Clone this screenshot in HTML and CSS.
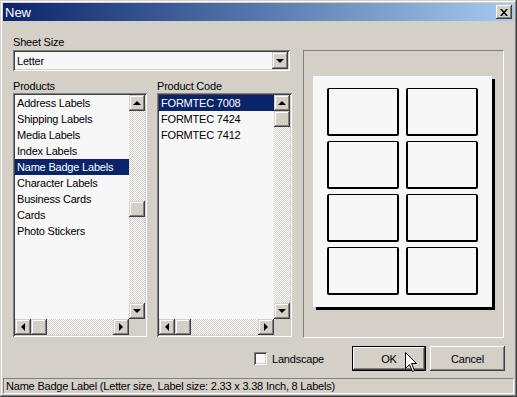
FILE: index.html
```html
<!DOCTYPE html>
<html lang="en">
<head>
    <meta charset="UTF-8">
    <title>New</title>
    <link rel="stylesheet" href="styles.css">
</head>
<body>
    <div class="window">
        <div class="titlebar">
            <span class="title">New</span>
            <span class="close">
                <svg width="8" height="7" viewBox="0 0 8 7"><path d="M0 0h2l2 2.5L6 0h2L5 3.5 8 7H6L4 4.5 2 7H0l3-3.5z" fill="#000"/></svg>
            </span>
        </div>
        <div class="content">
            <div class="main">
                <div class="left">
                    <div class="caption">Sheet Size</div>
                    <div class="combo">
                        <span class="combo-text">Letter</span>
                        <span class="sbtn down"></span>
                    </div>
                    <div class="lists">
                        <div class="group products">
                            <div class="caption">Products</div>
                            <div class="listbox">
                                <ul class="items">
                                    <li>Address Labels</li>
                                    <li>Shipping Labels</li>
                                    <li>Media Labels</li>
                                    <li>Index Labels</li>
                                    <li class="selected">Name Badge Labels</li>
                                    <li>Character Labels</li>
                                    <li>Business Cards</li>
                                    <li>Cards</li>
                                    <li>Photo Stickers</li>
                                </ul>
                                <div class="vscroll">
                                    <span class="sbtn up"></span>
                                    <div class="track"><span class="thumb thumb-low"></span></div>
                                    <span class="sbtn down"></span>
                                </div>
                                <div class="hscroll">
                                    <span class="sbtn left-arrow"></span>
                                    <div class="track"><span class="thumb"></span></div>
                                    <span class="sbtn right-arrow"></span>
                                </div>
                                <div class="corner"></div>
                            </div>
                        </div>
                        <div class="group codes">
                            <div class="caption">Product Code</div>
                            <div class="listbox">
                                <ul class="items">
                                    <li class="selected">FORMTEC 7008</li>
                                    <li>FORMTEC 7424</li>
                                    <li>FORMTEC 7412</li>
                                </ul>
                                <div class="vscroll">
                                    <span class="sbtn up"></span>
                                    <div class="track"><span class="thumb"></span></div>
                                    <span class="sbtn down"></span>
                                </div>
                                <div class="hscroll">
                                    <span class="sbtn left-arrow"></span>
                                    <div class="track"><span class="thumb"></span></div>
                                    <span class="sbtn right-arrow"></span>
                                </div>
                                <div class="corner"></div>
                            </div>
                        </div>
                    </div>
                </div>
                <div class="preview">
                    <div class="paper">
                        <div class="label"></div>
                        <div class="label"></div>
                        <div class="label"></div>
                        <div class="label"></div>
                        <div class="label"></div>
                        <div class="label"></div>
                        <div class="label"></div>
                        <div class="label"></div>
                    </div>
                </div>
            </div>
            <div class="footer">
                <label class="check"><span class="box"></span>Landscape</label>
                <div class="buttons">
                    <button class="btn default">OK</button>
                    <button class="btn">Cancel</button>
                </div>
            </div>
        </div>
        <div class="statusbar">Name Badge Label (Letter size, Label size: 2.33 x 3.38 Inch, 8 Labels)</div>
        <svg class="cursor" width="13" height="21" viewBox="0 0 13 21"><path d="M0.5 0.5V16.5L4.5 12.5L7.5 19.5L9.5 18.5L6.5 11.5H11.5Z" fill="#fff" stroke="#000" stroke-linejoin="miter"/></svg>
    </div>
</body>
</html>
```

FILE: styles.css
```css
body {
    margin: 0;
    font-family: 'Liberation Sans', Arial, sans-serif;
    font-size: 11px;
    letter-spacing: -0.2px;
    color: #000;
    background: #d4d0c8;
}
.window {
    position: relative;
    width: 517px;
    height: 397px;
    box-sizing: border-box;
    padding: 3px;
    background: #d4d0c8;
    box-shadow: inset -1px -1px #404040, inset 1px 1px #d4d0c8, inset -2px -2px #808080, inset 2px 2px #fff;
}
.titlebar {
    height: 18px;
    display: flex;
    align-items: center;
    justify-content: space-between;
    padding: 0 2px;
    background: linear-gradient(to right, #0a246a, #a6caf0);
}
.title {
    color: #fff;
    font-size: 13px;
    letter-spacing: 0;
}
.close {
    width: 16px;
    height: 14px;
    display: flex;
    align-items: center;
    justify-content: center;
    background: #d4d0c8;
    box-shadow: inset -1px -1px #404040, inset 1px 1px #fff, inset -2px -2px #808080, inset 2px 2px #d4d0c8;
}
.content {
    padding: 14px 10px 0 10px;
}
.main {
    display: flex;
    gap: 11px;
}
.left {
    width: 279px;
}
.caption {
    height: 14px;
    line-height: 14px;
}
.combo {
    width: 277px;
    height: 21px;
    margin-top: 1px;
    box-sizing: border-box;
    padding: 2px;
    display: flex;
    background: #f7f7f7;
    box-shadow: inset 1px 1px #808080, inset -1px -1px #fff, inset 2px 2px #404040, inset -2px -2px #d4d0c8;
}
.combo-text {
    flex: 1;
    padding-left: 2px;
    line-height: 18px;
}
.combo .sbtn {
    height: 17px;
}
.lists {
    display: flex;
    gap: 10px;
    margin-top: 8px;
}
.products {
    width: 134px;
}
.codes {
    width: 135px;
}
.listbox {
    height: 244px;
    box-sizing: border-box;
    padding: 2px;
    display: grid;
    grid-template-columns: 1fr 16px;
    grid-template-rows: 1fr 16px;
    background: #f7f7f7;
    box-shadow: inset 1px 1px #808080, inset -1px -1px #fff, inset 2px 2px #404040, inset -2px -2px #d4d0c8;
}
.items {
    list-style: none;
    margin: 0;
    padding: 0;
    overflow: hidden;
}
.items li {
    height: 16px;
    line-height: 17px;
    padding-left: 2px;
    white-space: nowrap;
}
.items li.selected {
    background: #0a246a;
    color: #fff;
}
.vscroll {
    display: flex;
    flex-direction: column;
}
.hscroll {
    display: flex;
}
.track {
    flex: 1;
    display: flex;
    flex-direction: inherit;
    background-color: #d4d0c8;
    background-image: conic-gradient(#fff 0 25%, #d4d0c8 0 50%, #fff 0 75%, #d4d0c8 0);
    background-size: 2px 2px;
}
.thumb, .sbtn {
    flex: none;
    width: 16px;
    height: 16px;
    background: #d4d0c8;
    box-shadow: inset -1px -1px #404040, inset 1px 1px #d4d0c8, inset -2px -2px #808080, inset 2px 2px #fff;
}
.thumb-low {
    margin-top: 90px;
}
.corner {
    background: #d4d0c8;
}
.sbtn {
    display: flex;
    align-items: center;
    justify-content: center;
}
.sbtn::before {
    content: "";
    width: 0;
    height: 0;
}
.sbtn.up::before {
    border-left: 4px solid transparent;
    border-right: 4px solid transparent;
    border-bottom: 4px solid #000;
}
.sbtn.down::before {
    border-left: 4px solid transparent;
    border-right: 4px solid transparent;
    border-top: 4px solid #000;
}
.sbtn.left-arrow::before {
    border-top: 4px solid transparent;
    border-bottom: 4px solid transparent;
    border-right: 4px solid #000;
}
.sbtn.right-arrow::before {
    border-top: 4px solid transparent;
    border-bottom: 4px solid transparent;
    border-left: 4px solid #000;
}
.preview {
    width: 201px;
    height: 288px;
    margin-top: 15px;
    box-sizing: border-box;
    padding: 25px 0 0 9px;
    border: 1px solid;
    border-color: #808080 #fff #fff #808080;
}
.paper {
    width: 179px;
    height: 231px;
    box-sizing: border-box;
    padding: 12px 14px;
    display: grid;
    grid-template-columns: 72px 72px;
    grid-auto-rows: 48px;
    gap: 5px 7px;
    background: #f7f7f7;
    box-shadow: 3px 3px 0 #000;
}
.label {
    border: 2px solid #000;
    border-width: 1px 2px 2px 2px;
    border-radius: 2px;
}
.footer {
    display: flex;
    align-items: center;
    height: 25px;
    margin-top: 8px;
    margin-right: -1px;
}
.check {
    display: flex;
    align-items: center;
    gap: 5px;
    margin-left: 241px;
}
.box {
    width: 13px;
    height: 13px;
    background: #f7f7f7;
    box-shadow: inset 1px 1px #808080, inset -1px -1px #fff, inset 2px 2px #404040, inset -2px -2px #d4d0c8;
}
.buttons {
    display: flex;
    gap: 4px;
    margin-left: auto;
}
.btn {
    width: 75px;
    height: 25px;
    padding: 0;
    border: none;
    font-family: inherit;
    font-size: 11px;
    letter-spacing: inherit;
    color: #000;
    background: #d4d0c8;
    box-shadow: inset -1px -1px #404040, inset 1px 1px #fff, inset -2px -2px #808080, inset 2px 2px #d4d0c8;
}
.btn.default {
    width: 74px;
    border: 1px solid #000;
}
.statusbar {
    height: 16px;
    margin-top: 7px;
    box-sizing: border-box;
    padding-left: 2px;
    line-height: 14px;
    border: 1px solid;
    border-color: #808080 #fff #fff #808080;
    white-space: nowrap;
}
.cursor {
    position: absolute;
    left: 405px;
    top: 352px;
}
```
